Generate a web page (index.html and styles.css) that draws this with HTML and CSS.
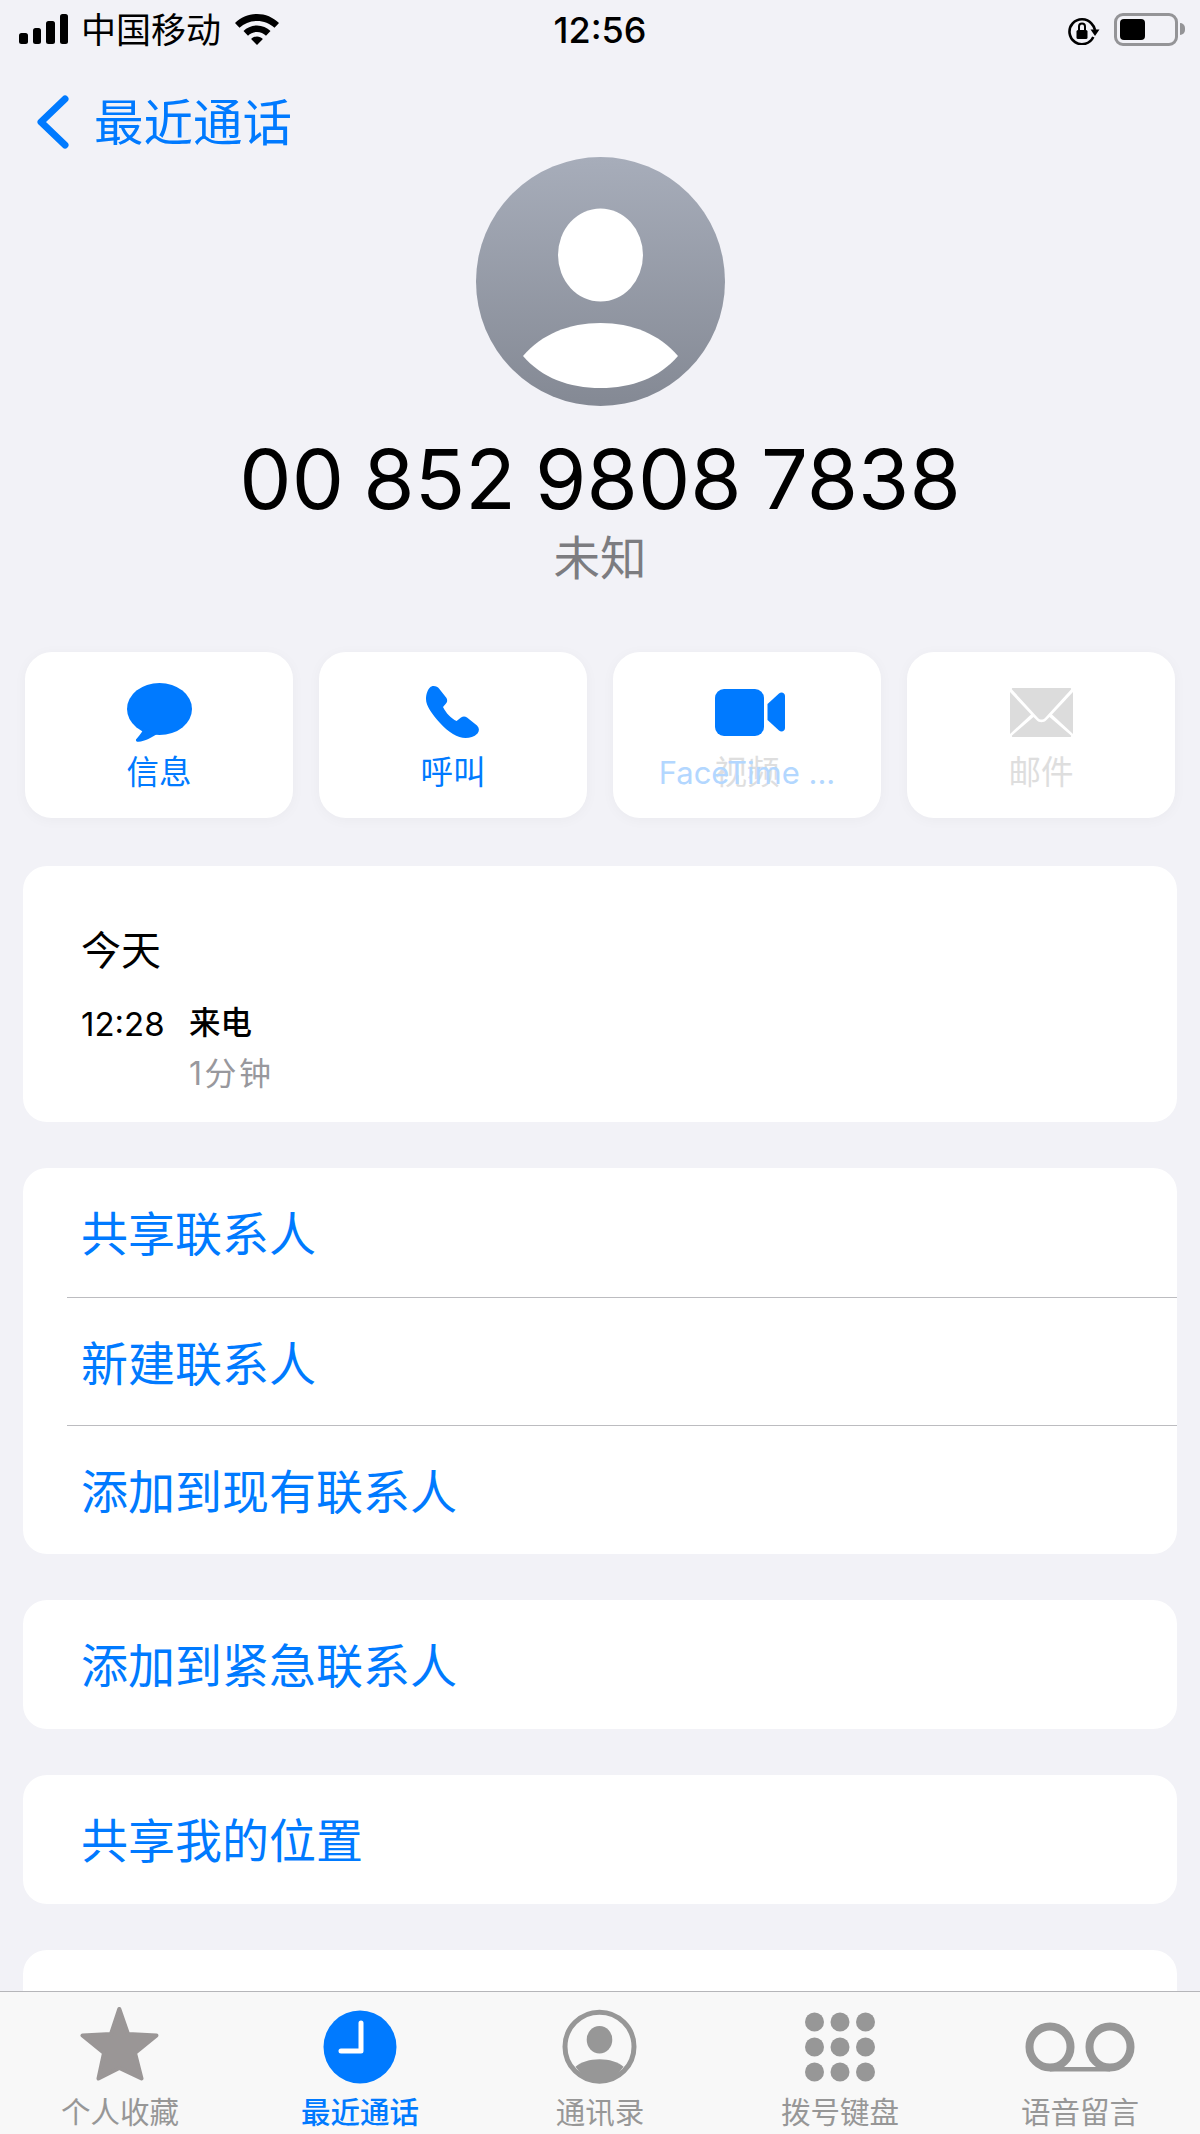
FILE: index.html
```html
<!DOCTYPE html>
<html lang="zh-CN">
<head>
    <meta charset="UTF-8">
    <meta name="viewport" content="width=device-width, initial-scale=1.0">
    <title>未知来电</title>
    <link rel="stylesheet" href="styles.css">
</head>
<body>
    <div class="screen">
        <div class="content">
            <div class="status">
                <div class="status-left">
                    <div class="signal"><i></i><i></i><i></i><i></i></div>
                    <span class="carrier">中国移动</span>
                    <svg class="wifi" viewBox="0 0 44 31"><path d="M22 0C30.500 0 38 3.300 44 9L39.500 13.800C34.800 9.500 28.700 6.900 22 6.900S9.200 9.500 4.500 13.800L0 9C6 3.300 13.500 0 22 0Z"/><path d="M22 11.500C27.300 11.500 32 13.600 35.500 17L31 21.700C28.700 19.400 25.500 18 22 18S15.300 19.400 13 21.700L8.500 17C12 13.600 16.700 11.500 22 11.500Z"/><path d="M22 22.500C24.300 22.500 26.400 23.400 27.900 24.900L22 31L16.100 24.900C17.600 23.400 19.700 22.500 22 22.500Z"/></svg>
                </div>
                <span class="clock">12:56</span>
                <div class="status-right">
                    <svg class="rotation" viewBox="0 0 32 30"><path d="M25.300 22A12.500 12.500 0 1 1 23.600 8.700C25.500 10.500 26.500 12.500 27 15" fill="none" stroke="#000" stroke-width="2.600"/><path d="M22.500 14.500H31.500L27 21Z"/><rect x="8.500" y="15" width="11" height="9" rx="1.500"/><path d="M11 15.500V11.500A3 3 0 0 1 17 11.500V15.500" fill="none" stroke="#000" stroke-width="2"/></svg>
                    <div class="battery"><div class="battery-fill"></div></div>
                    <div class="battery-cap"></div>
                </div>
            </div>

            <div class="nav">
                <svg class="chevron" viewBox="0 0 34 54"><path d="M29 4L5 27L29 50" fill="none" stroke="#007aff" stroke-width="7" stroke-linecap="round" stroke-linejoin="round"/></svg>
                <span class="nav-label">最近通话</span>
            </div>

            <svg class="avatar" viewBox="0 0 249 249">
                <defs>
                    <linearGradient id="avatarFill" x1="0" y1="0" x2="0" y2="1">
                        <stop offset="0" stop-color="#a7adba"/>
                        <stop offset="1" stop-color="#848994"/>
                    </linearGradient>
                </defs>
                <circle cx="124.500" cy="124.500" r="124.500" fill="url(#avatarFill)"/>
                <ellipse cx="124.500" cy="98" rx="42.500" ry="46.500" fill="#fff"/>
                <path d="M47 199C66 177 93 166 124.500 166S183 177 202 199C183 221 156 231 124.500 231S66 221 47 199Z" fill="#fff"/>
            </svg>
            <h1 class="number">00 852 9808 7838</h1>
            <div class="sub">未知</div>

            <div class="actions">
                <div class="action">
                    <div class="action-icon">
                        <svg width="65" height="59" viewBox="0 0 65 59"><ellipse cx="32.500" cy="26" rx="32.500" ry="26"/><path d="M15 44L16 47C14 51 11 54 9 56.500C8.500 58 10 59 11.500 58.800C18 58 25 54.500 30 51Z"/></svg>
                    </div>
                    <span class="action-label">信息</span>
                </div>
                <div class="action">
                    <div class="action-icon">
                        <svg width="54" height="52" viewBox="0 0 54 52"><path d="M7.500 0C10 0 12 1 13 2.500L20.500 12C21.500 14 21.500 16 20 17.500L17 21C20 27 25 32.500 30.600 35L35 31.500C37 30 39 30 41 31.500L51 39.500C53.500 42 53.500 45 51.500 47.500C48 51 44 52 39.500 52C32 52 22 46 14 37C6 28 0 20 0 13C0 8 2 3 4 1.500C5 .5 6 0 7.500 0Z"/></svg>
                    </div>
                    <span class="action-label">呼叫</span>
                </div>
                <div class="action">
                    <div class="action-icon video">
                        <svg width="70" height="47" viewBox="0 0 70 47"><rect width="49" height="47" rx="9"/><path d="M52.500 15L64 4.500C66.500 2.500 70 4 70 7V39C70 42 66.500 43.500 64 41.500L52.500 31Z"/></svg>
                    </div>
                    <span class="action-label muted">视频</span>
                    <span class="facetime">FaceTime ...</span>
                </div>
                <div class="action">
                    <div class="action-icon mail">
                        <svg width="63" height="49" viewBox="0 0 63 49"><path d="M3 0H60C61 0 61.500 1 61 1.500L35 30C33 32 30 32 28 30L2 1.500C1.500 1 2 0 3 0Z"/><path d="M0 4L21 26.500L0 46Z"/><path d="M63 4L42 26.500L63 46Z"/><path d="M23.500 29L26.500 32C29 35 34 35 36.500 32L39.500 29L61 47.500C61.500 48 61 49 60 49H3C2 49 1.500 48 2 47.500Z"/></svg>
                    </div>
                    <span class="action-label muted">邮件</span>
                </div>
            </div>

            <div class="card info">
                <div class="info-day">今天</div>
                <div class="call-row">
                    <span class="call-time">12:28</span>
                    <span class="call-type">来电</span>
                </div>
                <div class="call-length">1分钟</div>
            </div>

            <div class="card">
                <div class="row">共享联系人</div>
                <div class="row">新建联系人</div>
                <div class="row">添加到现有联系人</div>
            </div>

            <div class="card">
                <div class="row">添加到紧急联系人</div>
            </div>

            <div class="card">
                <div class="row">共享我的位置</div>
            </div>

            <div class="card">
                <div class="row"></div>
            </div>
        </div>

        <div class="tabbar">
            <div class="tab">
                <svg class="tab-icon" viewBox="0 0 82 76"><path class="star" d="M40.300 1L49 26L77.500 27.500L56 45L62.500 70.500L40.300 60L19.500 70.500L25 45L3.500 27.500L32 26Z"/></svg>
                <span class="tab-label">个人收藏</span>
            </div>
            <div class="tab active">
                <svg class="tab-icon" viewBox="0 0 74 76"><circle cx="37" cy="39" r="36.500" fill="#007aff"/><path d="M38 15V43H18" fill="none" stroke="#fff" stroke-width="5" stroke-linecap="round" stroke-linejoin="round"/></svg>
                <span class="tab-label">最近通话</span>
            </div>
            <div class="tab">
                <svg class="tab-icon" viewBox="0 0 76 76">
                    <circle cx="37.500" cy="38.700" r="34.500" fill="none" stroke="#979797" stroke-width="5"/>
                    <ellipse cx="37.500" cy="31.700" rx="12.800" ry="13.700"/>
                    <path d="M13.500 58.700C19 54 28 51.300 37.500 51.300S56 54 61.500 58.700C55 68 47 75 37.500 75S20 68 13.500 58.700Z"/>
                </svg>
                <span class="tab-label">通讯录</span>
            </div>
            <div class="tab">
                <svg class="tab-icon" viewBox="0 0 76 76">
                    <circle cx="12.500" cy="14" r="9.500"/><circle cx="38" cy="14" r="9.500"/><circle cx="63.500" cy="14" r="9.500"/>
                    <circle cx="12.500" cy="39" r="9.500"/><circle cx="38" cy="39" r="9.500"/><circle cx="63.500" cy="39" r="9.500"/>
                    <circle cx="12.500" cy="64" r="9.500"/><circle cx="38" cy="64" r="9.500"/><circle cx="63.500" cy="64" r="9.500"/>
                </svg>
                <span class="tab-label">拨号键盘</span>
            </div>
            <div class="tab">
                <svg class="tab-icon" viewBox="0 0 110 76">
                    <circle cx="25" cy="39" r="20.500" fill="none" stroke="#979797" stroke-width="8"/>
                    <circle cx="85" cy="39" r="20.500" fill="none" stroke="#979797" stroke-width="8"/>
                    <rect x="25" y="59" width="60" height="4.500"/>
                </svg>
                <span class="tab-label">语音留言</span>
            </div>
        </div>
    </div>
</body>
</html>
```

FILE: styles.css
```css
body {
    margin: 0;
    font-family: "Inter", "Noto Sans CJK SC", "Liberation Sans", sans-serif;
    background-color: #f2f2f7;
    color: #000;
}
.screen {
    width: 1200px;
    height: 2134px;
    display: flex;
    flex-direction: column;
    overflow: hidden;
}
.content {
    flex: 1;
    min-height: 0;
    overflow: hidden;
}

/* status bar */
.status {
    height: 60px;
    display: grid;
    grid-template-columns: 1fr auto 1fr;
    align-items: center;
    padding: 0 15px;
}
.status-left {
    display: flex;
    align-items: center;
    padding-left: 4px;
}
.signal {
    display: flex;
    align-items: flex-end;
    gap: 5px;
    height: 30px;
    margin-bottom: 2px;
}
.signal i {
    width: 8.5px;
    background-color: #000;
    border-radius: 2.5px;
    height: 11px;
}
.signal i:nth-child(2) { height: 16px; }
.signal i:nth-child(3) { height: 23px; }
.signal i:nth-child(4) { height: 30px; }
.carrier {
    font-size: 35px;
    line-height: 44px;
    margin-left: 13px;
}
.wifi {
    width: 44px;
    height: 31px;
    margin-left: 14px;
    margin-bottom: 2px;
}
.clock {
    font-size: 36px;
    font-weight: 500;
    line-height: 48px;
}
.status-right {
    display: flex;
    align-items: center;
    justify-content: flex-end;
}
.rotation {
    width: 32px;
    height: 30px;
}
.battery {
    width: 64px;
    height: 33px;
    box-sizing: border-box;
    margin: 0 0 2px 14px;
    border: 3px solid #949497;
    border-radius: 9px;
    padding: 3px;
}
.battery-fill {
    width: 25px;
    height: 100%;
    background-color: #000;
    border-radius: 4px;
}
.battery-cap {
    width: 5px;
    height: 12px;
    margin: 0 0 2px 2px;
    background-color: #949497;
    border-radius: 0 6px 6px 0;
}

/* back link */
.nav {
    display: flex;
    align-items: center;
    height: 48px;
    padding: 38px 0 11px 36px;
}
.chevron {
    width: 34px;
    height: 54px;
}
.nav-label {
    font-size: 49.5px;
    line-height: 48px;
    color: #007aff;
    margin-left: 24px;
    padding-top: 2px;
}

/* header */
.avatar {
    display: block;
    width: 249px;
    height: 249px;
    margin: 0 auto;
}
.number {
    margin: 23px 0 0;
    font-size: 83px;
    font-weight: 400;
    word-spacing: -4px;
    line-height: 100px;
    text-align: center;
}
.sub {
    font-size: 46.5px;
    line-height: 58px;
    text-align: center;
    color: #7c7c80;
}

/* action buttons */
.actions {
    display: grid;
    grid-template-columns: repeat(4, 268px);
    gap: 26px;
    justify-content: center;
    margin-top: 65px;
}
.action {
    position: relative;
    height: 166px;
    display: flex;
    flex-direction: column;
    align-items: center;
    background-color: #fff;
    border-radius: 27px;
    box-shadow: 0 2px 14px rgba(0, 0, 0, 0.035);
}
.action-icon {
    height: 60px;
    margin-top: 30px;
    display: flex;
    align-items: center;
    fill: #007aff;
}
.action-icon.video { padding-left: 5px; }
.action-icon.mail { fill: #dcdcdc; }
.action-label {
    font-size: 32.5px;
    line-height: 44px;
    margin-top: 9px;
    color: #007aff;
}
.action-label.muted { color: #dedede; }
.facetime {
    position: absolute;
    left: 0;
    right: 0;
    top: 99px;
    font-size: 31px;
    line-height: 44px;
    text-align: center;
    color: #b3d7ff;
}

/* white cards */
.card {
    margin: 46.5px 23px 0;
    background-color: #fff;
    border-radius: 24px;
}
.info {
    height: 255.5px;
    box-sizing: border-box;
    padding: 60px 58px 0;
    margin-top: 48px;
}
.info-day {
    font-size: 40px;
    line-height: 50px;
}
.call-row {
    display: flex;
    align-items: flex-start;
    margin-top: 22px;
    height: 44px;
}
.call-time {
    width: 108px;
    font-size: 33px;
    line-height: 52px;
}
.call-type {
    font-size: 31.5px;
    font-weight: 500;
    line-height: 49px;
}
.call-length {
    margin: 10px 0 0 108px;
    font-size: 32px;
    letter-spacing: 2.5px;
    line-height: 44px;
    color: #98989d;
}
.row {
    height: 128.5px;
    box-sizing: border-box;
    padding-left: 58px;
    font-size: 47px;
    line-height: 131px;
    color: #007aff;
}
.row + .row {
    border-top: 1px solid #bcbcc0;
    margin-left: 44px;
    padding-left: 14px;
}

/* tab bar */
.tabbar {
    flex-shrink: 0;
    height: 143px;
    box-sizing: border-box;
    display: grid;
    grid-template-columns: repeat(5, 1fr);
    border-top: 1px solid #b6b6ba;
    background-color: #f8f8f8;
}
.tab {
    display: flex;
    flex-direction: column;
    align-items: center;
    padding-top: 16px;
    fill: #979797;
    color: #979797;
}
.tab.active { color: #007aff; }
.tab-icon {
    height: 76px;
    overflow: visible;
}
.tab-icon .star {
    fill: #9a9696;
    stroke: #9a9696;
    stroke-width: 4;
    stroke-linejoin: round;
}
.tab-label {
    font-size: 29.5px;
    line-height: 40px;
    margin-top: 8px;
}
.tab.active .tab-label { font-weight: 500; }
```
